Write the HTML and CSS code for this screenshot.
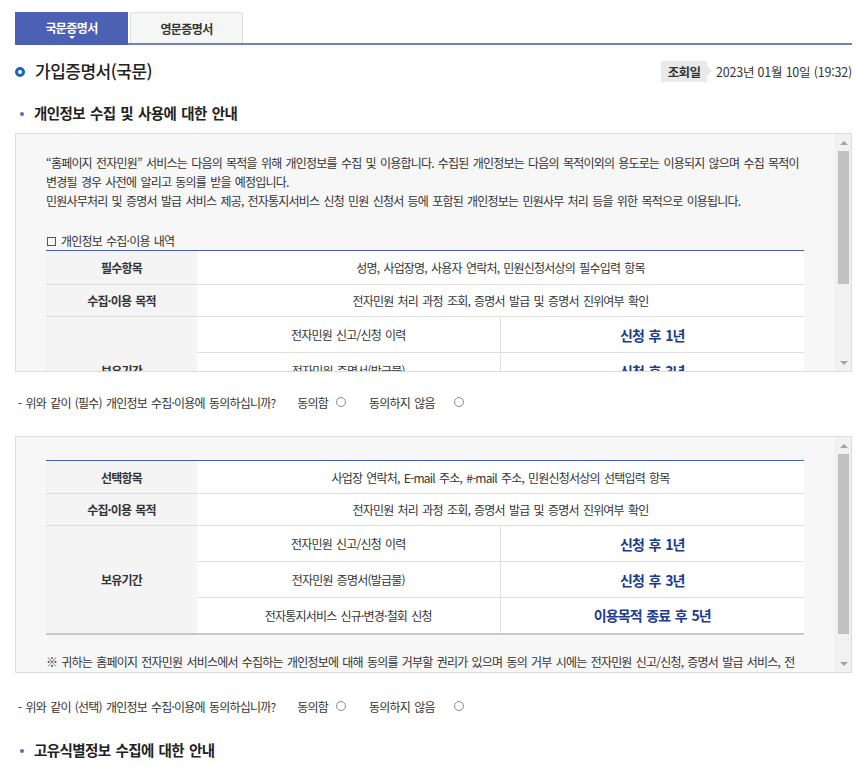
FILE: index.html
```html
<!DOCTYPE html>
<html lang="ko">
<head>
<meta charset="utf-8">
<title>가입증명서(국문)</title>
<link rel="stylesheet" href="styles.css">
</head>
<body>
<div class="page">
  <div class="tabs">
    <div class="tab tab-active">국문증명서</div>
    <div class="tab">영문증명서</div>
  </div>

  <div class="title-row">
    <h1 class="title"><span class="ring"></span>가입증명서(국문)</h1>
    <div class="inq">
      <span class="badge">조회일</span>
      <span class="date">2023년 01월 10일 (19:32)</span>
    </div>
  </div>

  <h2 class="sub"><span class="dot"></span>개인정보 수집 및 사용에 대한 안내</h2>

  <div class="box box1">
    <div class="box-view">
      <div class="box-in">
        <p class="para">“홈페이지 전자민원” 서비스는 다음의 목적을 위해 개인정보를 수집 및 이용합니다. 수집된 개인정보는 다음의 목적이외의 용도로는 이용되지 않으며 수집 목적이<br>변경될 경우 사전에 알리고 동의를 받을 예정입니다.<br>민원사무처리 및 증명서 발급 서비스 제공, 전자통지서비스 신청 민원 신청서 등에 포함된 개인정보는 민원사무 처리 등을 위한 목적으로 이용됩니다.</p>
        <p class="cap"><span class="sq"></span>개인정보 수집·이용 내역</p>
        <table class="tbl">
          <colgroup><col class="c1"><col class="c2"><col class="c3"></colgroup>
          <tr class="r1"><th>필수항목</th><td colspan="2">성명, 사업장명, 사용자 연락처, 민원신청서상의 필수입력 항목</td></tr>
          <tr class="r2"><th>수집·이용 목적</th><td colspan="2">전자민원 처리 과정 조회, 증명서 발급 및 증명서 진위여부 확인</td></tr>
          <tr class="r3"><th rowspan="3">보유기간</th><td class="mid">전자민원 신고/신청 이력</td><td class="strong">신청 후 1년</td></tr>
          <tr class="r3"><td class="mid">전자민원 증명서(발급물)</td><td class="strong">신청 후 3년</td></tr>
          <tr class="r3"><td class="mid">전자통지서비스 신규·변경·철회 신청</td><td class="strong">이용목적 종료 후 5년</td></tr>
        </table>
        <p class="note">※ 귀하는 홈페이지 전자민원 서비스에서 수집하는 개인정보에 대해 동의를 거부할 권리가 있으며 동의 거부 시에는 전자민원 신고/신청, 증명서 발급 서비스, 전자통지서비스 이용에 제한을 받을 수 있습니다.</p>
      </div>
    </div>
    <div class="sbar">
      <span class="sbtn"><span class="arr-up"></span></span>
      <span class="track"><span class="thumb thumb1"></span></span>
      <span class="sbtn"><span class="arr-dn"></span></span>
    </div>
  </div>

  <div class="agree">
    <span class="q">- 위와 같이 (필수) 개인정보 수집·이용에 동의하십니까?</span>
    <label class="opt">동의함<span class="radio"></span></label>
    <label class="opt">동의하지 않음<span class="radio radio-far"></span></label>
  </div>

  <div class="box box2">
    <div class="box-view">
      <div class="box-in box-in2">
        <table class="tbl tbl2">
          <colgroup><col class="c1"><col class="c2"><col class="c3"></colgroup>
          <tr class="r1"><th>선택항목</th><td colspan="2">사업장 연락처, E-mail 주소, #-mail 주소, 민원신청서상의 선택입력 항목</td></tr>
          <tr class="r2"><th>수집·이용 목적</th><td colspan="2">전자민원 처리 과정 조회, 증명서 발급 및 증명서 진위여부 확인</td></tr>
          <tr class="r3"><th rowspan="3">보유기간</th><td class="mid">전자민원 신고/신청 이력</td><td class="strong">신청 후 1년</td></tr>
          <tr class="r3"><td class="mid">전자민원 증명서(발급물)</td><td class="strong">신청 후 3년</td></tr>
          <tr class="r3"><td class="mid">전자통지서비스 신규·변경·철회 신청</td><td class="strong">이용목적 종료 후 5년</td></tr>
        </table>
        <p class="note note2">※ 귀하는 홈페이지 전자민원 서비스에서 수집하는 개인정보에 대해 동의를 거부할 권리가 있으며 동의 거부 시에는 전자민원 신고/신청, 증명서 발급 서비스, 전자통지서비스 이용에 제한을 받을 수 있습니다.</p>
      </div>
    </div>
    <div class="sbar">
      <span class="sbtn"><span class="arr-up"></span></span>
      <span class="track"><span class="thumb thumb2"></span></span>
      <span class="sbtn"><span class="arr-dn"></span></span>
    </div>
  </div>

  <div class="agree agree2">
    <span class="q">- 위와 같이 (선택) 개인정보 수집·이용에 동의하십니까?</span>
    <label class="opt">동의함<span class="radio"></span></label>
    <label class="opt">동의하지 않음<span class="radio radio-far"></span></label>
  </div>

  <h2 class="sub sub2"><span class="dot"></span>고유식별정보 수집에 대한 안내</h2>
</div>
</body>
</html>
```

FILE: styles.css
```css
* { box-sizing: border-box; }
html, body { margin: 0; padding: 0; background: #fff; }
body {
  font-family: "Noto Sans CJK KR", "Noto Sans", sans-serif;
  color: #333;
  font-size: 12px;
  letter-spacing: -0.8px;
  word-spacing: 1.6px;
}
.page { padding: 12px 9px 0 15px; width: 861px; }

/* tabs */
.tabs {
  display: flex;
  align-items: flex-end;
  height: 33px;
  border-bottom: 2px solid #7080c6;
  gap: 2px;
}
.tab {
  width: 113px;
  height: 31px;
  display: flex;
  align-items: center;
  justify-content: center;
  background: #f6f6f6;
  border: 1px solid #dedede;
  border-bottom: 0;
  border-radius: 3px 3px 0 0;
  font-weight: 700;
  font-size: 12px;
  letter-spacing: -0.6px;
  color: #333;
}
.tab-active {
  height: 33px;
  margin-bottom: -2px;
  background: #4d61b4;
  border: 0;
  border-radius: 0;
  color: #fff;
  position: relative;
  padding-bottom: 2px;
}
.tab-active::after {
  content: "";
  position: absolute;
  left: 50%;
  bottom: 6px;
  margin-left: -3px;
  border-left: 3px solid transparent;
  border-right: 3px solid transparent;
  border-top: 3px solid #fff;
}

/* title */
.title-row {
  margin-top: 15px;
  height: 22px;
  display: flex;
  align-items: center;
  justify-content: space-between;
}
.title {
  margin: 0;
  display: flex;
  align-items: center;
  font-size: 17px;
  font-weight: 500;
  letter-spacing: -0.5px;
  color: #222;
  line-height: 22px;
}
.ring {
  width: 10px;
  height: 10px;
  border: 3px solid #1d63b9;
  border-radius: 50%;
  margin-right: 10px;
  margin-top: 1px;
}
.inq { display: flex; align-items: center; height: 21px; }
.badge {
  position: relative;
  height: 21px;
  width: 46px;
  background: #e9e9e9;
  display: flex;
  align-items: center;
  justify-content: center;
  font-weight: 700;
  font-size: 12.5px;
  letter-spacing: -0.6px;
  color: #333;
  margin-right: 9px;
}
.badge::after {
  content: "";
  position: absolute;
  right: -5px;
  top: 50%;
  margin-top: -5px;
  border-top: 5px solid transparent;
  border-bottom: 5px solid transparent;
  border-left: 5px solid #e9e9e9;
}
.date {
  font-size: 12.5px;
  letter-spacing: -0.2px;
  word-spacing: 0;
  color: #333;
}

/* subtitle */
.sub {
  margin: 21px 0 0 0;
  height: 20px;
  display: flex;
  align-items: center;
  font-size: 14.5px;
  font-weight: 700;
  letter-spacing: -0.6px;
  word-spacing: 1.5px;
  color: #222;
  line-height: 20px;
}
.dot {
  width: 4px;
  height: 4px;
  border-radius: 50%;
  background: #5a6cb8;
  margin: 1px 10px 0 5px;
}

/* boxes */
.box {
  display: flex;
  border: 1px solid #dcdcdc;
  background: #f7f7f7;
}
.box1 { margin-top: 10px; height: 239px; }
.box2 { margin-top: 24px; height: 237px; }
.box-view { flex: 1; overflow: hidden; }
.box-in { padding: 19px 32px 20px 30px; }
.box-in2 { padding-top: 23px; }
.para { margin: 0; line-height: 19px; }
.cap {
  margin: 21px 0 0 0;
  line-height: 19px;
  display: flex;
  align-items: center;
}
.sq {
  width: 9px;
  height: 9px;
  border: 1px solid #555;
  margin: 1px 5px 0 1px;
}

/* fake scrollbar */
.sbar {
  width: 16px;
  display: flex;
  flex-direction: column;
  background: #f1f1f1;
  border-left: 1px solid #ececec;
}
.sbtn {
  height: 17px;
  display: flex;
  align-items: center;
  justify-content: center;
}
.arr-up, .arr-dn {
  width: 0;
  height: 0;
  border-left: 4px solid transparent;
  border-right: 4px solid transparent;
}
.arr-up { border-bottom: 4px solid #a3a3a3; }
.arr-dn { border-top: 4px solid #a3a3a3; }
.track { flex: 1; display: flex; flex-direction: column; padding: 0 2px; }
.thumb { display: block; background: #c1c1c1; }
.thumb1 { height: 133px; }
.thumb2 { height: 180px; }

/* tables */
.tbl {
  width: 758px;
  border-collapse: collapse;
  border-top: 1px solid #4a5eb8;
  table-layout: fixed;
}
.tbl2 { border-bottom: 2px solid #c9c9c9; }
.c1 { width: 151px; }
.c2 { width: 303px; }
.c3 { width: 304px; }
.tbl th, .tbl td {
  padding: 0;
  text-align: center;
  border-bottom: 1px solid #dedede;
  font-size: 12px;
}
.tbl tr:last-child td { border-bottom: 0; }
.tbl th {
  background: #f4f4f4;
  font-weight: 700;
  color: #333;
}
.tbl td { background: #fff; color: #333; }
.tbl td.mid { border-right: 1px solid #dedede; }
.tbl td.strong {
  font-size: 14px;
  font-weight: 700;
  letter-spacing: -0.9px;
  color: #1c3b8e;
}
.r1 { height: 34px; }
.r2 { height: 32px; }
.r3 { height: 36px; }
.tbl2 .r1 { height: 33px; }

.note {
  margin: 17px 0 0 0;
  line-height: 19px;
  word-break: break-all;
}

/* agree rows */
.agree {
  margin-top: 20px;
  height: 20px;
  display: flex;
  align-items: center;
  padding-left: 3px;
}
.agree2 { margin-top: 23px; }
.q { margin-right: 22px; }
.opt { display: flex; align-items: center; margin-right: 23px; }
.radio {
  display: inline-block;
  width: 10px;
  height: 10px;
  border: 1px solid #8a8a8a;
  border-radius: 50%;
  background: #fff;
  margin-left: 8px;
}
.radio-far { margin-left: 19px; }
.sub2 { margin-top: 24px; }
```
